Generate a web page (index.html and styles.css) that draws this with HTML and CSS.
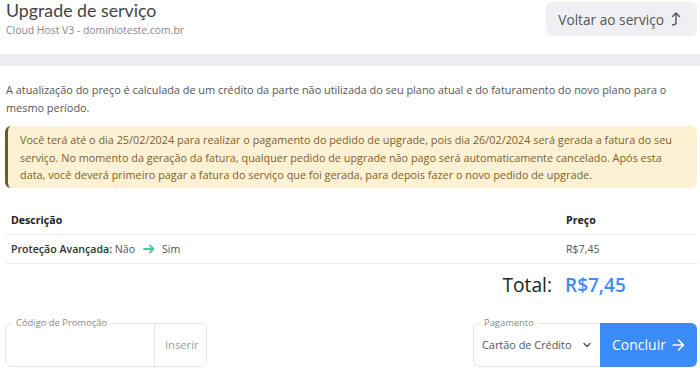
FILE: index.html
```html
<!DOCTYPE html>
<html lang="pt-BR">
<head>
<meta charset="utf-8">
<link rel="stylesheet" href="styles.css">
</head>
<body>
<header class="top">
  <div class="titles">
    <h1 class="title">Upgrade de serviço</h1>
    <div class="subtitle">Cloud Host V3 - dominioteste.com.br</div>
  </div>
  <button class="back-btn">Voltar ao serviço
    <svg class="back-icon" width="11" height="16" viewBox="0 0 11 16"><path d="M2.5 5.5 L6 2 L9.5 5.5 M6 2 V11.5 Q6 13.8 3.5 13.8 H2.5" fill="none" stroke="#555" stroke-width="1.4" stroke-linecap="round" stroke-linejoin="round"/></svg>
  </button>
</header>
<div class="band"></div>
<main class="content">
  <p class="intro">A atualização do preço é calculada de um crédito da parte não utilizada do seu plano atual e do faturamento do novo plano para o mesmo período.</p>
  <div class="alert">Você terá até o dia 25/02/2024 para realizar o pagamento do pedido de upgrade, pois dia 26/02/2024 será gerada a fatura do seu serviço. No momento da geração da fatura, qualquer pedido de upgrade não pago será automaticamente cancelado. Após esta data, você deverá primeiro pagar a fatura do serviço que foi gerada, para depois fazer o novo pedido de upgrade.</div>
  <div class="table">
    <div class="row head">
      <div class="c-desc">Descrição</div>
      <div class="c-price">Preço</div>
    </div>
    <div class="row">
      <div class="c-desc"><span class="strong">Proteção Avançada:</span>&nbsp;Não
        <svg class="arrow" width="12" height="10" viewBox="0 0 12 10"><path d="M1 5 H10.5 M7 1.5 L10.5 5 L7 8.5" fill="none" stroke="#3ecf95" stroke-width="1.8" stroke-linecap="round" stroke-linejoin="round"/></svg>
        Sim</div>
      <div class="c-price">R$7,45</div>
    </div>
  </div>
  <div class="total">
    <span class="total-label">Total:</span>
    <span class="total-value">R$7,45</span>
  </div>
  <div class="actions">
    <div class="box promo">
      <span class="legend">Código de Promoção</span>
      <div class="promo-input"></div>
      <div class="promo-btn">Inserir</div>
    </div>
    <div class="pay-group">
      <div class="box pay">
        <span class="legend">Pagamento</span>
        <div class="select">Cartão de Crédito
          <svg width="8" height="6" viewBox="0 0 8 6"><path d="M1 1.5 L4 4.5 L7 1.5" fill="none" stroke="#555" stroke-width="1.4" stroke-linecap="round" stroke-linejoin="round"/></svg>
        </div>
      </div>
      <button class="go">Concluir
        <svg width="13" height="12" viewBox="0 0 13 12"><path d="M1 6 H11.5 M6.5 1 L11.5 6 L6.5 11" fill="none" stroke="#fff" stroke-width="1.5" stroke-linecap="round" stroke-linejoin="round"/></svg>
      </button>
    </div>
  </div>
</main>
</body>
</html>
```
FILE: styles.css
```css
* { box-sizing: border-box; }
body {
  margin: 0;
  font-family: "Open Sans", "Noto Sans", sans-serif;
  color: #555;
  background: #fff;
}
.top {
  display: flex;
  justify-content: space-between;
  align-items: flex-start;
  height: 54px;
  padding: 0 3px 0 6px;
}
.title {
  margin: 0;
  font-family: Lato, "Open Sans", sans-serif;
  font-size: 17.8px;
  font-weight: 400;
  color: #444;
  line-height: 20px;
}
.subtitle {
  margin-top: 3px;
  font-size: 10.4px;
  color: #888;
  line-height: 15px;
}
.back-btn {
  display: flex;
  align-items: center;
  gap: 6px;
  height: 34px;
  margin-top: 2px;
  padding: 0 16px 0 12px;
  border: 0;
  border-radius: 6px;
  background: #eef0f4;
  font-family: inherit;
  font-size: 13.7px;
  color: #555;
}
.band {
  height: 12px;
  background: #eeeff3;
}
.content {
  padding: 0 3px 0 5px;
}
.intro {
  margin: 15px 0 0 1px;
  font-size: 10.9px;
  line-height: 17.5px;
  color: #555;
}
.alert {
  margin-top: 10px;
  padding: 5px 12px 4px 12px;
  background: #fdf1d4;
  border-left: 3px solid #6b5a2a;
  border-radius: 6px;
  font-size: 10.85px;
  line-height: 17.5px;
  color: #7d5f2c;
}
.table {
  margin-top: 18px;
}
.row {
  display: flex;
  align-items: center;
  height: 29px;
  padding: 0 6px;
  border-bottom: 1px solid #eeeeee;
  font-size: 10.6px;
  color: #555;
}
.row.head {
  height: 29px;
  font-weight: 700;
  color: #222;
}
.c-desc { flex: 1; display: flex; align-items: center; }
.c-price { width: 125px; }
.strong { font-weight: 600; color: #333; }
.arrow { margin: 0 7px 0 8px; }
.total {
  display: flex;
  align-items: baseline;
  margin-top: 8px;
  line-height: 26px;
}
.total-label {
  flex: 1;
  text-align: right;
  font-size: 19.2px;
  color: #222;
  padding-right: 13px;
}
.total-value {
  width: 132px;
  font-size: 19px;
  font-weight: 600;
  color: #3d8cf5;
}
.actions {
  display: flex;
  justify-content: space-between;
  margin-top: 25px;
}
.box {
  position: relative;
  height: 44px;
  border: 1px solid #e4e4e4;
  border-radius: 6px;
}
.legend {
  position: absolute;
  top: -7px;
  left: 6px;
  padding: 0 4px;
  background: #fff;
  font-size: 9.4px;
  line-height: 12px;
  color: #888;
}
.promo {
  display: flex;
  width: 202px;
}
.promo-input { flex: 1; }
.promo-btn {
  display: flex;
  align-items: center;
  width: 52px;
  padding-left: 10px;
  border-left: 1px solid #e4e4e4;
  font-size: 11.2px;
  color: #9a9a9a;
}
.pay-group {
  display: flex;
}
.pay {
  display: flex;
  align-items: center;
  width: 127px;
  border-radius: 6px 0 0 6px;
  border-right: 0;
}
.select {
  display: flex;
  align-items: center;
  gap: 11px;
  padding-left: 8px;
  font-size: 10.9px;
  color: #555;
}
.go {
  display: flex;
  align-items: center;
  gap: 6px;
  width: 97px;
  height: 44px;
  padding: 0 0 0 12px;
  border: 0;
  border-radius: 0 6px 6px 0;
  background: #3b8bfb;
  color: #fff;
  font-family: inherit;
  font-size: 14px;
}
```
